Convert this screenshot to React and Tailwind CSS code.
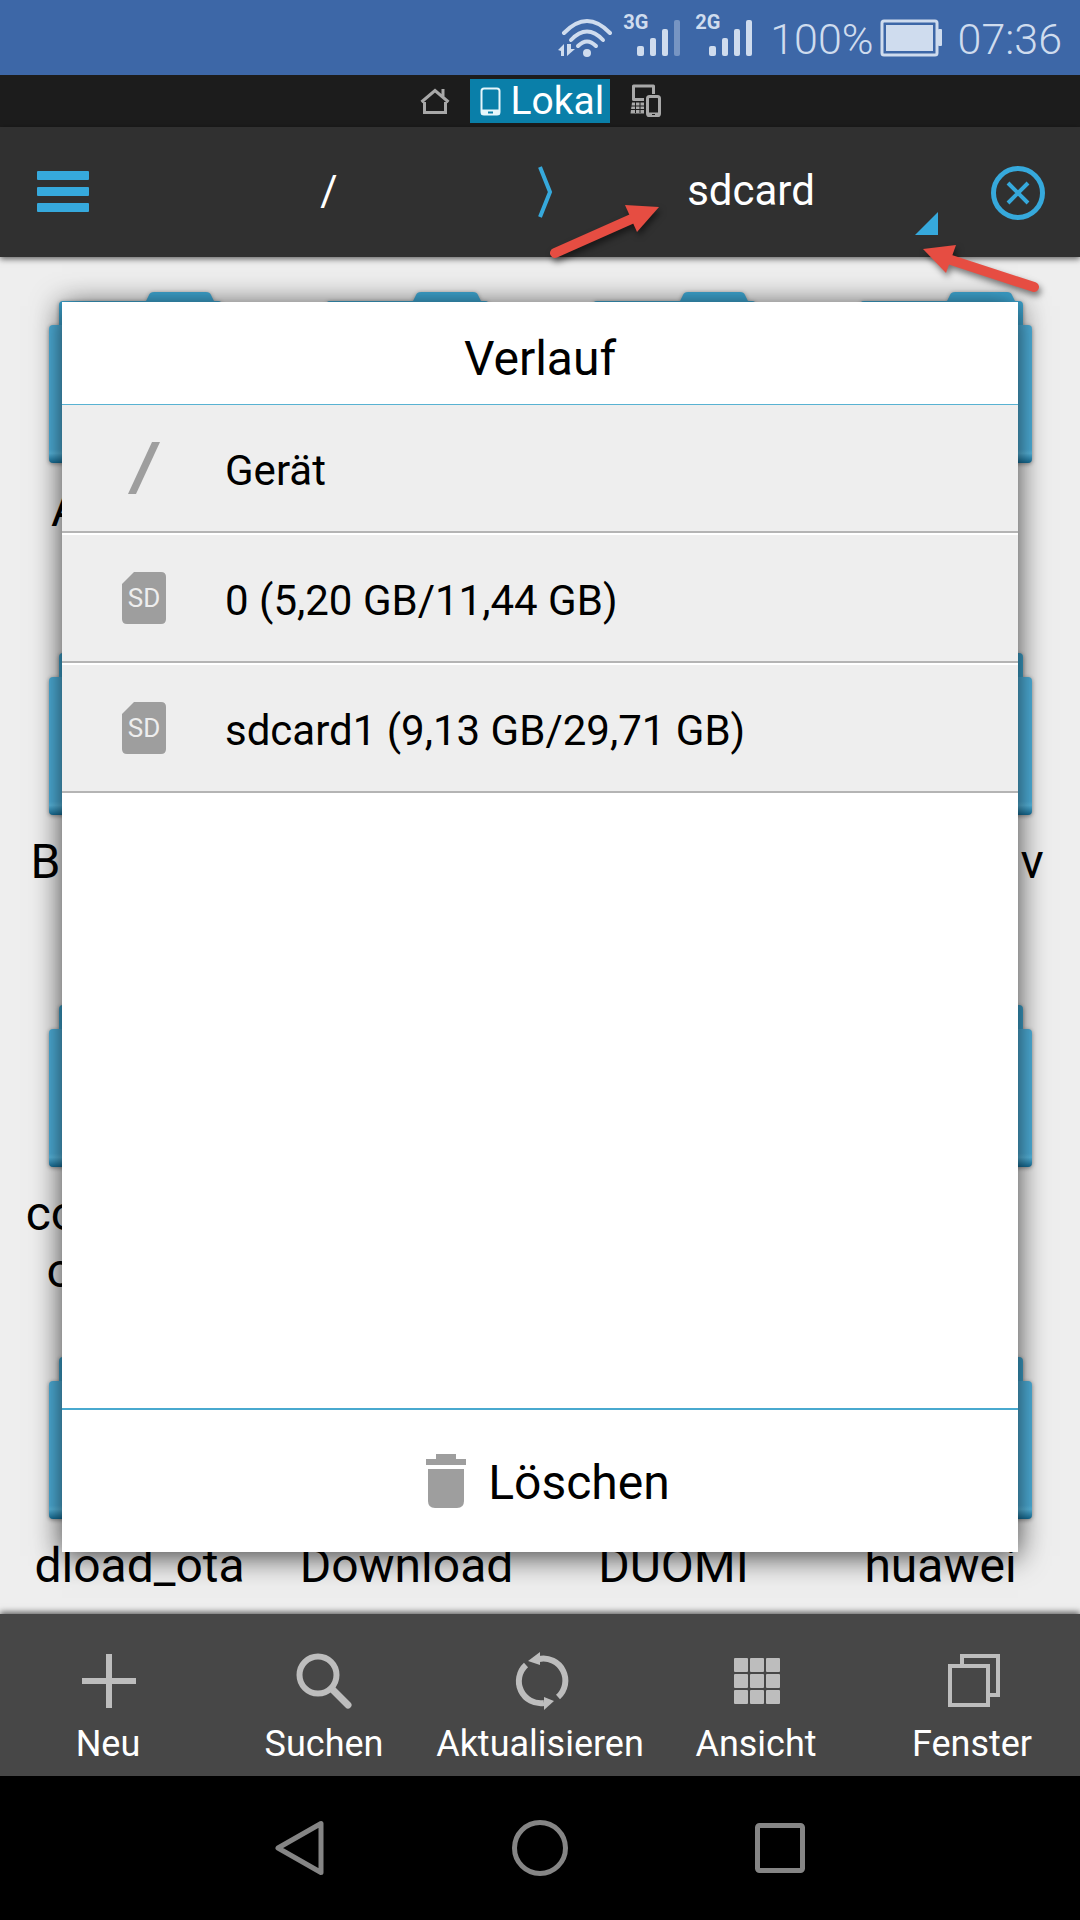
import React from 'react';

const folders = [
  'Amazon', 'Android', 'backups', 'baidu',
  'Broadcast', 'Books', 'cache', 'CloudDriv e',
  'com.faceb ook.orca', 'data', 'DCIM', 'dianxin',
  'dload_ota', 'Download', 'DUOMI', 'huawei',
];

const history = [
  { icon: 'root', label: 'Gerät' },
  { icon: 'sd', label: '0 (5,20 GB/11,44 GB)' },
  { icon: 'sd', label: 'sdcard1 (9,13 GB/29,71 GB)' },
];

function WifiIcon() {
  return (
    <svg width="54" height="40" viewBox="0 0 54 40" fill="none" stroke="#cfdcee" strokeWidth="4" strokeLinecap="round">
      <path d="M6 15Q29 -9 52 15" />
      <path d="M13 22Q29 5 45 22" />
      <path d="M20 28Q29 19 38 28" />
      <circle cx="29" cy="35" r="4" fill="#cfdcee" stroke="none" />
      <path d="M0 32L6 26V38H3V33ZM9 26V38L17 31H13V26Z" fill="#cfdcee" stroke="none" />
    </svg>
  );
}

function Signal({ type, full }) {
  return (
    <div className="relative h-[43px] w-[57px]">
      <span className="absolute left-0 top-0 text-[20px] leading-[16px] font-bold">{type}</span>
      <svg className="h-full w-full" viewBox="0 0 57 43" fill="#cfdcee">
        <rect x="14" y="32" width="7" height="10" rx="2" />
        <rect x="27" y="24" width="6" height="18" rx="2" />
        <rect x="39" y="15" width="6" height="27" rx="2" />
        <rect x="51" y="6" width="6" height="36" rx="2" opacity={full ? 1 : 0.4} />
      </svg>
    </div>
  );
}

function StatusBar() {
  return (
    <div className="flex h-[75px] items-center justify-end bg-[#3d67a7] pb-2 pr-[18px] text-[43px] font-light text-[#cfdcee]">
      <div className="mr-[11px] pt-2"><WifiIcon /></div>
      <div className="mr-[15px] pt-1"><Signal type="3G" /></div>
      <div className="mr-[18px] pt-1"><Signal type="2G" full /></div>
      <span className="pt-3">100%</span>
      <svg className="mr-4 ml-[6px] mt-2" width="62" height="38" viewBox="0 0 62 38">
        <rect x="2" y="2" width="55" height="34" rx="2" fill="none" stroke="#cfdcee" strokeWidth="3" />
        <rect x="6" y="6" width="47" height="26" fill="#cfdcee" />
        <rect x="58" y="10" width="4" height="17" rx="1" fill="#cfdcee" />
      </svg>
      <span className="pt-3">07:36</span>
    </div>
  );
}

function LocationTabs() {
  return (
    <div className="flex h-[52px] items-center justify-center gap-5 bg-[#1c1c1c]">
      <button aria-label="Home">
        <svg width="30" height="28" viewBox="0 0 30 28" fill="none" stroke="#a8a8a8" strokeWidth="3">
          <path d="M1.500 15L15 3.500L28.500 15M23 10V2" />
          <path d="M4.500 15V25.500H25.500V15" />
        </svg>
      </button>
      <button className="flex h-11 w-[140px] items-center bg-[#0a7fa9] pl-[10px] text-[39px] leading-[44px] text-white">
        <svg className="mr-[10px]" width="21" height="29" viewBox="0 0 21 29">
          <rect x="1.500" y="1.500" width="18" height="26" rx="2.500" fill="none" stroke="#e6f6fb" strokeWidth="2" />
          <path d="M1 22.500H20V26Q20 28 18 28H3Q1 28 1 26Z" fill="#e6f6fb" />
          <path d="M8 25.500H13" stroke="#0a7fa9" strokeWidth="2" />
        </svg>
        Lokal
      </button>
      <button aria-label="Netzwerk">
        <svg width="31" height="34" viewBox="0 0 31 34" fill="none" stroke="#a8a8a8">
          <path d="M14 15.500H3.500V2H23.500V10" strokeWidth="3" strokeLinejoin="round" />
          <path d="M2 18.500H14V29.500H0.500Z" fill="#a8a8a8" stroke="none" />
          <path d="M1 22H14M0 25.500H14M5.500 18V29M10 18V29" stroke="#1c1c1c" strokeWidth="1" />
          <rect x="17.500" y="12.500" width="12" height="19" rx="2" strokeWidth="3" />
          <path d="M17 28.500H30V31Q30 33 28 33H19Q17 33 17 31Z" fill="#a8a8a8" stroke="none" />
          <path d="M22 30.500H25" stroke="#1c1c1c" />
        </svg>
      </button>
    </div>
  );
}

function Toolbar() {
  return (
    <header className="relative z-10 flex h-[130px] bg-[#303030] text-[42px] text-white shadow-[0_2px_6px_rgba(0,0,0,0.6)]">
      <button aria-label="Menü" className="flex w-[118px] items-center pl-[37px]">
        <svg width="52" height="42" viewBox="0 0 52 42" fill="#36a9dc">
          <rect y="0" width="52" height="9" rx="1" />
          <rect y="16" width="52" height="9" rx="1" />
          <rect y="32" width="52" height="9" rx="1" />
        </svg>
      </button>
      <nav className="flex flex-1 items-stretch">
        <button className="flex-1 pb-1">/</button>
        <svg className="-mx-2 w-4 self-center" height="52" viewBox="0 0 16 52" overflow="visible" fill="none" stroke="#36a9dc" strokeWidth="4">
          <path d="M8 1L18 26L8 51" />
        </svg>
        <button className="relative flex-1 pb-1">
          sdcard
          <svg className="absolute right-6 bottom-[22px]" width="23" height="23" viewBox="0 0 23 23">
            <path d="M23 0V23H0Z" fill="#36a9dc" />
          </svg>
        </button>
      </nav>
      <button aria-label="Schließen" className="flex w-[118px] items-center justify-end pr-[35px] pt-[2px]">
        <svg width="54" height="54" viewBox="0 0 54 54" fill="none" stroke="#36a9dc">
          <circle cx="27" cy="27" r="24.500" strokeWidth="5" />
          <path d="M17 17L37 37M37 17L17 37" strokeWidth="4" />
        </svg>
      </button>
    </header>
  );
}

function Arrows() {
  return (
    <svg className="pointer-events-none absolute top-[190px] right-0 z-30 drop-shadow-[2px_4px_3px_rgba(0,0,0,0.5)]" width="540" height="120" viewBox="0 0 540 120" fill="#e64d42" stroke="#e64d42">
      <path d="M15 63L96 27" strokeWidth="10" strokeLinecap="round" />
      <path d="M119 17L85 15L97 42Z" stroke="none" />
      <path d="M494 97L408 69" strokeWidth="10" strokeLinecap="round" />
      <path d="M383 59L416 55L406 83Z" stroke="none" />
    </svg>
  );
}

function FolderIcon() {
  return (
    <svg className="drop-shadow-[0_1px_2px_rgba(0,0,0,0.4)]" width="182" height="172" viewBox="0 0 182 172">
      <defs>
        <linearGradient id="folder" x1="0" y1="0" x2="0" y2="1">
          <stop offset="0" stopColor="#50b4e0" />
          <stop offset="0.9" stopColor="#50b4e0" />
          <stop offset="0.93" stopColor="#5cbfe8" />
          <stop offset="1" stopColor="#14709b" />
        </linearGradient>
      </defs>
      <path d="M10 14Q10 10 14 10H97L100 4Q101 1 105 1H157Q161 1 162 4L165 10H169Q173 10 173 14V60H10Z" fill="#3fa8d4" />
      <rect x="0" y="34" width="182" height="138" rx="4" fill="url(#folder)" />
    </svg>
  );
}

function FolderGrid() {
  return (
    <div className="grid grid-cols-4 px-[6px] pt-[34px]">
      {folders.map((name) => (
        <button key={name} className="flex h-[352px] flex-col items-center text-[48px] leading-[57px] text-black">
          <FolderIcon />
          <span className="mt-[18px] w-[240px]">{name}</span>
        </button>
      ))}
    </div>
  );
}

function RowIcon({ type }) {
  if (type === 'root') {
    return (
      <svg width="44" height="52" viewBox="0 0 44 52">
        <path d="M6 52L30 0H38L14 52Z" fill="#9e9e9e" />
      </svg>
    );
  }
  return (
    <span className="relative flex h-[52px] w-11 items-center justify-center">
      <svg className="absolute inset-0" width="44" height="52" viewBox="0 0 44 52">
        <path d="M12 0H39Q44 0 44 5V47Q44 52 39 52H5Q0 52 0 47V12Z" fill="#9e9e9e" />
      </svg>
      <span className="relative text-[26px] leading-[52px] text-[#eeeeee]">SD</span>
    </span>
  );
}

function HistoryDialog() {
  return (
    <section role="dialog" aria-label="Verlauf" className="absolute inset-x-[62px] top-[45px] bottom-[62px] z-20 flex flex-col bg-white text-black shadow-[0_4px_28px_rgba(0,0,0,0.75)]">
      <h2 className="flex h-[103px] items-center justify-center border-b border-[#58b2d2] pt-3 text-[48px]">Verlauf</h2>
      <ul className="divide-y-2 divide-white">
        {history.map((item) => (
          <li key={item.label}>
            <button className="flex h-32 w-full items-center border-b-2 border-[#b4b4b4] bg-[#eeeeee] pl-[60px] text-[42px]">
              <RowIcon type={item.icon} />
              <span className="pl-[59px] pt-1">{item.label}</span>
            </button>
          </li>
        ))}
      </ul>
      <button className="mt-auto flex h-[144px] items-center justify-center gap-[22px] border-t-2 border-[#48a9cf] pl-4 text-[48px]">
        <svg width="40" height="54" viewBox="0 0 40 54" fill="#9e9e9e">
          <path d="M0 5H10V0H30V5H40V11H0Z" />
          <path d="M2 15H38V47Q38 54 31 54H9Q2 54 2 47Z" />
        </svg>
        <span className="pt-1">Löschen</span>
      </button>
    </section>
  );
}

const actions = [
  {
    label: 'Neu',
    icon: <path d="M29 1V55M2 28H56" stroke="#bdbdbd" strokeWidth="6" />,
  },
  {
    label: 'Suchen',
    icon: (
      <g fill="none" stroke="#bdbdbd">
        <circle cx="22" cy="22" r="18.500" strokeWidth="6" />
        <path d="M36 36L52 52" strokeWidth="7" strokeLinecap="round" />
      </g>
    ),
  },
  {
    label: 'Aktualisieren',
    icon: (
      <g fill="none" stroke="#bdbdbd" strokeWidth="6">
        <path d="M14 12A22 22 0 0 0 32 50" />
        <path d="M27 6A22 22 0 0 1 46 44" />
        <path d="M28 -1V12L16 8Z" fill="#bdbdbd" stroke="none" />
        <path d="M32 44V57L42 48Z" fill="#bdbdbd" stroke="none" />
      </g>
    ),
  },
  {
    label: 'Ansicht',
    icon: (
      <g fill="#bdbdbd">
        {[5, 21, 37].map((y) => [6, 22, 38].map((x) => (
          <rect key={`${x}-${y}`} x={x} y={y} width="14" height="14" rx="1" />
        )))}
      </g>
    ),
  },
  {
    label: 'Fenster',
    icon: (
      <g fill="none" stroke="#bdbdbd" strokeWidth="4">
        <rect x="6" y="13" width="38" height="39" />
        <path d="M18 12V3H54V42H44" />
      </g>
    ),
  },
];

function ActionBar() {
  return (
    <footer className="relative z-10 grid h-[162px] grid-cols-5 bg-[#474747] text-[36px] leading-[42px] text-white shadow-[0_-2px_6px_rgba(0,0,0,0.6)]">
      {actions.map((action) => (
        <button key={action.label} className="flex flex-col items-center gap-[14px] pt-[39px]">
          <svg width="56" height="56" viewBox="0 0 56 56" overflow="visible" className="shrink-0">
            {action.icon}
          </svg>
          <span>{action.label}</span>
        </button>
      ))}
    </footer>
  );
}

function NavBar() {
  return (
    <div className="flex h-36 items-center justify-center gap-[184px] bg-black">
      <button aria-label="Zurück">
        <svg width="56" height="56" viewBox="0 0 56 56" fill="none" stroke="#858585" strokeWidth="5" strokeLinejoin="round">
          <path d="M49 3.500V52.500L6 28Z" />
        </svg>
      </button>
      <button aria-label="Startseite">
        <svg width="56" height="56" viewBox="0 0 56 56" fill="none" stroke="#858585" strokeWidth="5">
          <circle cx="28" cy="28" r="25.500" />
        </svg>
      </button>
      <button aria-label="Übersicht">
        <svg width="56" height="56" viewBox="0 0 56 56" fill="none" stroke="#858585" strokeWidth="5">
          <rect x="5.500" y="5.500" width="45" height="45" rx="2" />
        </svg>
      </button>
    </div>
  );
}

export default function App() {
  return (
    <div className="relative flex h-screen flex-col overflow-hidden bg-[#eeeeee] font-[Roboto,sans-serif]">
      <StatusBar />
      <LocationTabs />
      <Toolbar />
      <main className="relative min-h-0 flex-1">
        <div className="h-full overflow-hidden">
          <FolderGrid />
        </div>
        <HistoryDialog />
      </main>
      <ActionBar />
      <NavBar />
      <Arrows />
    </div>
  );
}
